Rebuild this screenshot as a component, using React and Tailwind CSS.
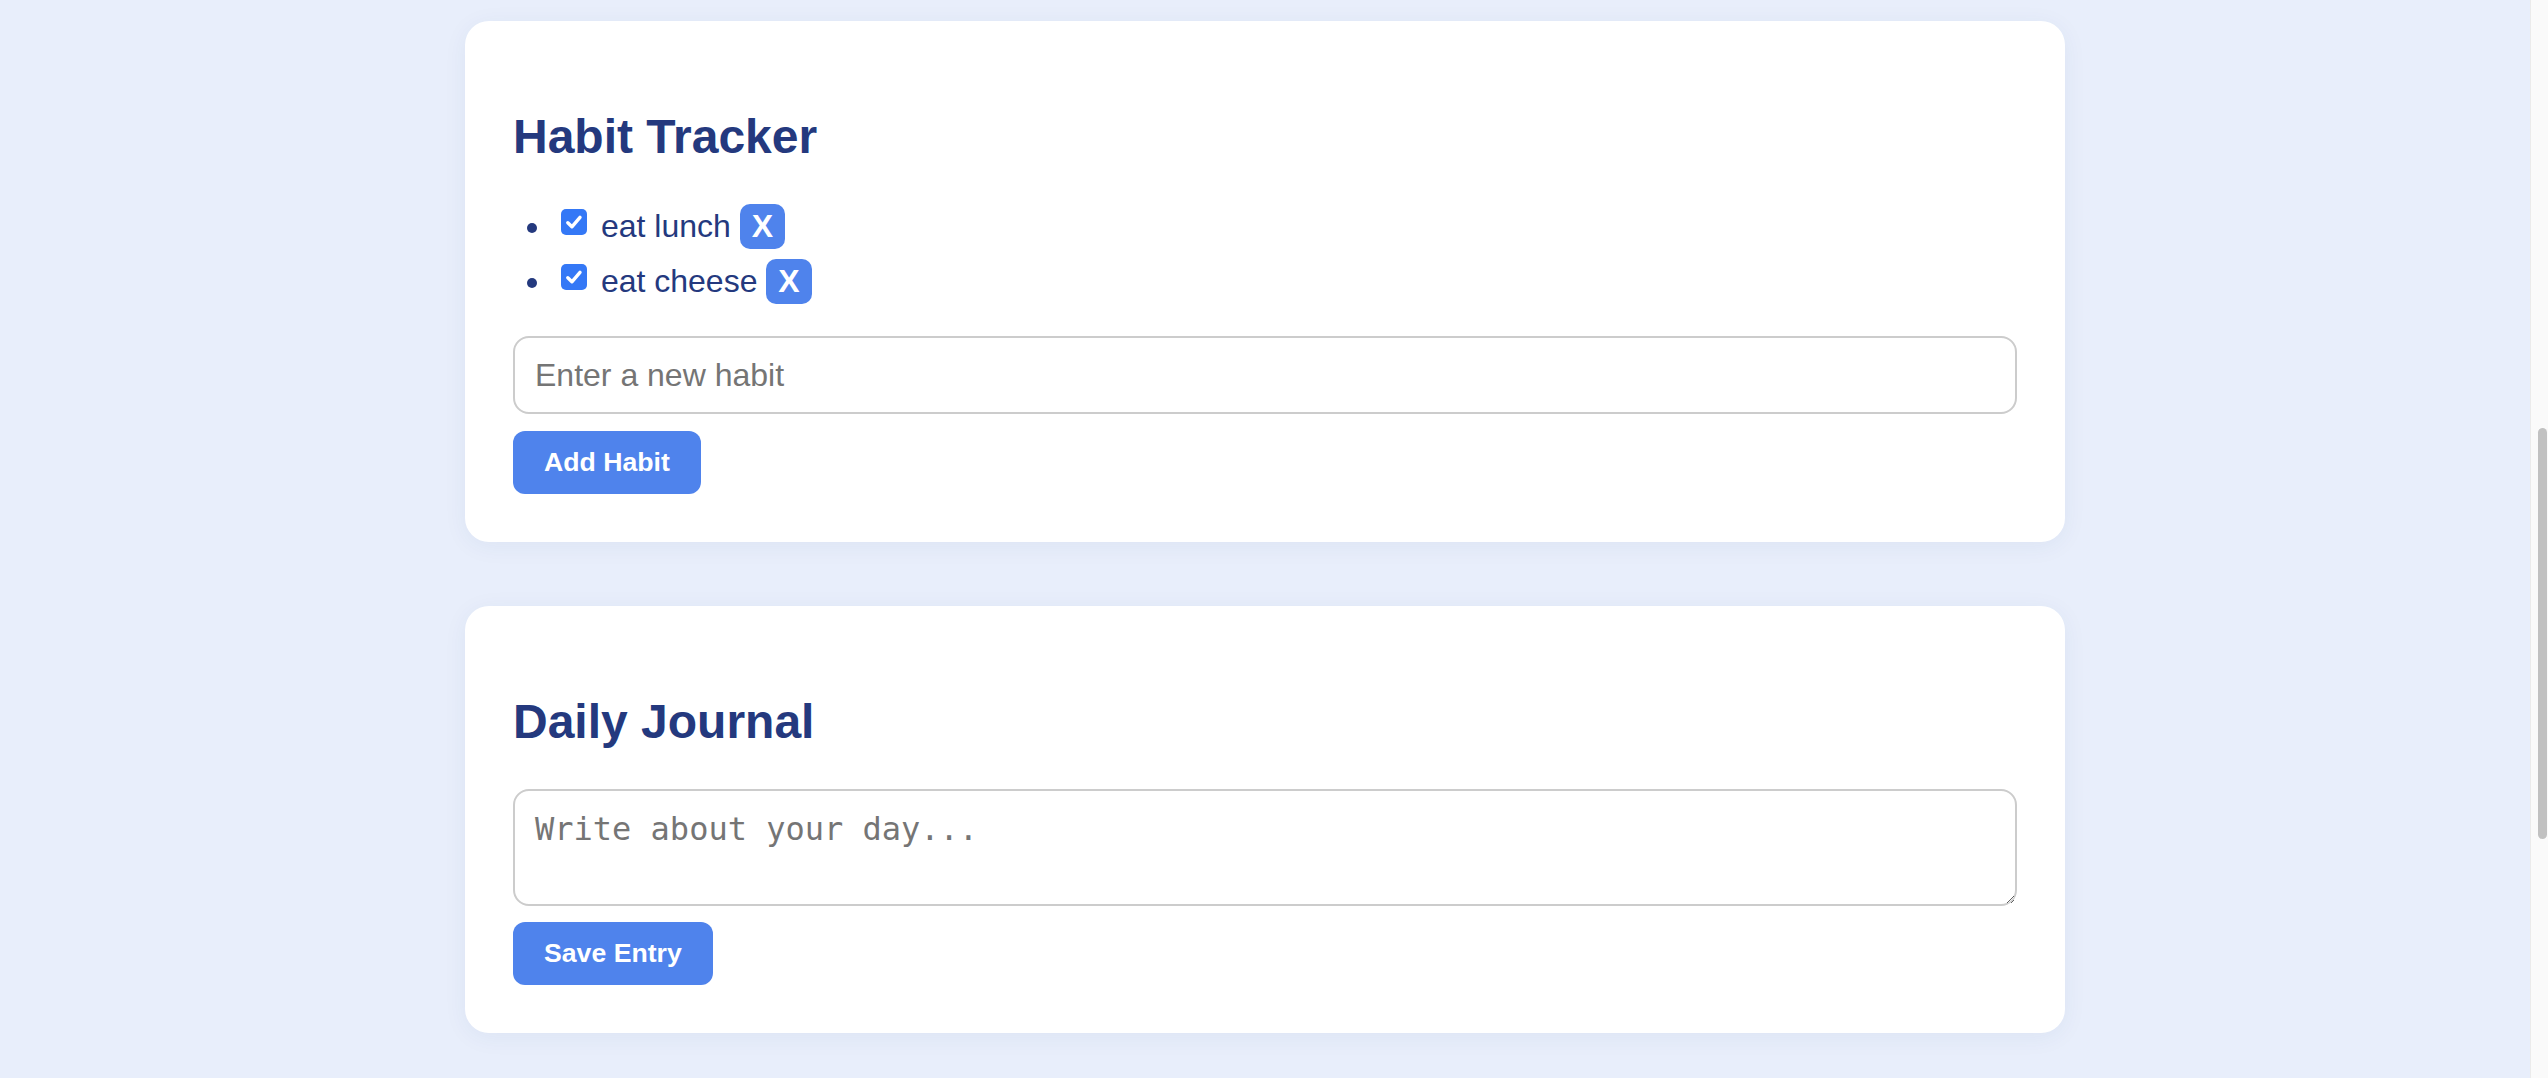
import { useState } from "react";

function CheckBox({ checked, onToggle }) {
  return (
    <svg
      onClick={onToggle}
      width="26"
      height="26"
      viewBox="0 0 26 26"
      className="inline-block align-[2px] ml-[8px] mr-[5px] cursor-pointer"
    >
      {checked ? (
        <>
          <rect x="0" y="0" width="26" height="26" rx="5" fill="#3478f6" />
          <path
            d="M6.8 13.8 L10.9 17.8 L19 8.4"
            fill="none"
            stroke="#fff"
            strokeWidth="3.4"
            strokeLinecap="round"
            strokeLinejoin="round"
          />
        </>
      ) : (
        <rect x="1" y="1" width="24" height="24" rx="5" fill="#fff" stroke="#767676" strokeWidth="2" />
      )}
    </svg>
  );
}

export default function App() {
  const [habits, setHabits] = useState([
    { id: 1, name: "eat lunch", done: true },
    { id: 2, name: "eat cheese", done: true },
  ]);
  const [draft, setDraft] = useState("");
  const [entry, setEntry] = useState("");

  const addHabit = () => {
    if (!draft.trim()) return;
    setHabits([...habits, { id: Date.now(), name: draft.trim(), done: false }]);
    setDraft("");
  };

  return (
    <div className="flex h-[1078px] overflow-hidden bg-[#e8eefb] font-['Liberation_Sans',Arial,sans-serif]">
      <main className="flex-1 min-w-0 pt-[21px]">
        {/* habits */}
        <section className="mx-auto w-[1600px] bg-white rounded-[24px] p-[48px] shadow-[0_4px_24px_rgba(40,60,120,0.06)]">
          <h2 className="mt-[40px] mb-[40px] text-[48px] leading-[55px] font-bold text-[#24397e]">
            Habit Tracker
          </h2>

          <ul className="list-disc pl-[40px] mb-[32px] text-[32px] leading-[37px] text-[#24397e]">
            {habits.map((h) => (
              <li key={h.id} className="mb-[10px] last:mb-0">
                <CheckBox
                  checked={h.done}
                  onToggle={() =>
                    setHabits(habits.map((x) => (x.id === h.id ? { ...x, done: !x.done } : x)))
                  }
                />{" "}
                {h.name}{" "}
                <button
                  onClick={() => setHabits(habits.filter((x) => x.id !== h.id))}
                  className="inline-block bg-[#4f83ec] text-white font-bold text-[32px] leading-[37px] px-[12px] py-[4px] rounded-[10px]"
                >
                  X
                </button>
              </li>
            ))}
          </ul>

          <input
            value={draft}
            onChange={(e) => setDraft(e.target.value)}
            placeholder="Enter a new habit"
            className="block w-full h-[78px] border-2 border-[#cccccc] rounded-[16px] px-[20px] text-[32px] text-[#222] placeholder:text-[#757575] outline-none"
          />

          <button
            onClick={addHabit}
            className="block mt-[17px] bg-[#4f83ec] text-white font-bold text-[26.67px] leading-[31px] py-[16px] px-[31px] rounded-[12px]"
          >
            Add Habit
          </button>
        </section>

        {/* journal */}
        <section className="mx-auto mt-[64px] w-[1600px] bg-white rounded-[24px] p-[48px] shadow-[0_4px_24px_rgba(40,60,120,0.06)]">
          <h2 className="mt-[40px] mb-[40px] text-[48px] leading-[55px] font-bold text-[#24397e]">
            Daily Journal
          </h2>

          <textarea
            value={entry}
            onChange={(e) => setEntry(e.target.value)}
            placeholder="Write about your day..."
            className="block w-full h-[117px] border-2 border-[#cccccc] rounded-[16px] p-[20px] font-['DejaVu_Sans_Mono',monospace] text-[32px] leading-[37px] text-[#222] placeholder:text-[#757575] outline-none resize-y"
          />

          <button className="block mt-[16px] bg-[#4f83ec] text-white font-bold text-[26.67px] leading-[31px] py-[16px] px-[31px] rounded-[12px]">
            Save Entry
          </button>
        </section>
      </main>

      {/* scrollbar */}
      <aside className="w-[18px] shrink-0 border-l border-[#ebebeb] bg-[#fafafa]">
        <div className="mt-[428px] ml-[7px] w-[9px] h-[411px] rounded-full bg-[#c1c1c1]" />
      </aside>
    </div>
  );
}
